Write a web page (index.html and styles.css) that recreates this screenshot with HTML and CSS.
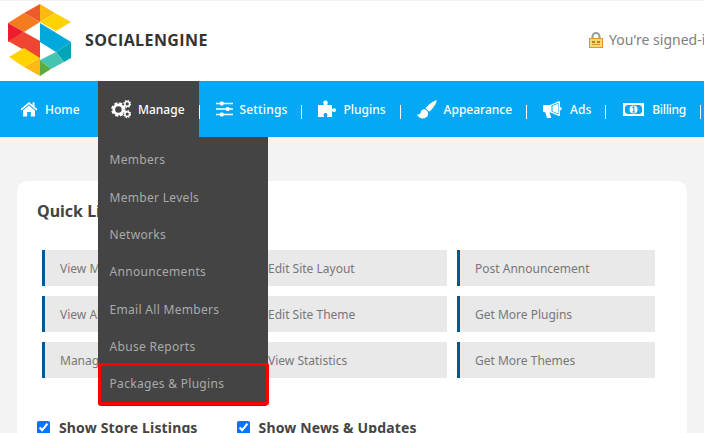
FILE: index.html
```html
<!DOCTYPE html>
<html lang="en">
<head>
<meta charset="utf-8">
<title>SocialEngine Admin</title>
<link rel="stylesheet" href="styles.css">
</head>
<body>
<header class="header">
  <svg class="logo" viewBox="0 0 72 80" width="72" height="80" aria-hidden="true">
    <polygon fill="#ef5a2d" points="40,3 40,21 24,12"/>
    <polygon fill="#f47b20" points="24,12 40,21 24,31 8,22"/>
    <polygon fill="#fdb913" points="40,3 55,12 40,21"/>
    <polygon fill="#ffd200" points="55,12 71,21 56,30 40,21"/>
    <polygon fill="#ed1c2e" points="8,22 24,31 8,41"/>
    <polygon fill="#f04530" points="24,31 40,40 40,58 8,40"/>
    <polygon fill="#00a8dc" points="40,22 71,41 56,51 40,41"/>
    <polygon fill="#00a6b8" points="71,41 71,57 64,61 56,51"/>
    <polygon fill="#45c4b4" points="56,51 64,61 51,68 40,59"/>
    <polygon fill="#5bab3e" points="40,59 51,68 40,75"/>
    <polygon fill="#ffd200" points="9,56 24,47 40,57 24,66"/>
    <polygon fill="#fdb913" points="24,66 40,57 40,75"/>
  </svg>
  <div class="brand">SOCIALENGINE</div>
  <div class="signed">
    <svg class="lock" viewBox="0 0 14 16" width="14" height="16" aria-hidden="true">
      <path d="M3.5 7V4.5a3.5 3.5 0 0 1 7 0V7" fill="none" stroke="#9a9a9a" stroke-width="2"/>
      <rect x="0.5" y="6.5" width="13" height="9" fill="#f8d675" stroke="#d99a2b"/>
      <rect x="3" y="9" width="3" height="2" fill="#b8801f"/>
      <rect x="8" y="9" width="3" height="2" fill="#b8801f"/>
      <rect x="3" y="12" width="8" height="1" fill="#d99a2b"/>
    </svg>
    <span>You're signed-in as admin</span>
  </div>
</header>

<nav class="nav">
  <a class="nav-item first">
    <svg class="icon" viewBox="0 0 18 16" width="18" height="16" aria-hidden="true">
      <path d="M9 1 L0.5 8.3 L1.6 9.4 L9 3.2 L16.4 9.4 L17.5 8.3 L14.5 5.7 V1.5 H12.5 V4 Z" fill="#fff"/>
      <path d="M9 4.4 L3 9.4 V15.5 H7.2 V11 H10.8 V15.5 H15 V9.4 Z" fill="#fff"/>
    </svg>Home</a>
  <div class="nav-item manage">
    <svg class="icon" viewBox="0 0 22 20" width="22" height="20" aria-hidden="true">
      <circle cx="8" cy="10.5" r="5" fill="none" stroke="#fff" stroke-width="3"/>
      <circle cx="8" cy="10.5" r="6.6" fill="none" stroke="#fff" stroke-width="2.4" stroke-dasharray="3.2 2"/>
      <circle cx="17.5" cy="4.5" r="2.5" fill="none" stroke="#fff" stroke-width="1.6"/>
      <circle cx="17.5" cy="4.5" r="3.7" fill="none" stroke="#fff" stroke-width="1.3" stroke-dasharray="1.6 1.3"/>
      <circle cx="17.5" cy="15.5" r="2.5" fill="none" stroke="#fff" stroke-width="1.6"/>
      <circle cx="17.5" cy="15.5" r="3.7" fill="none" stroke="#fff" stroke-width="1.3" stroke-dasharray="1.6 1.3"/>
    </svg>Manage
    <ul class="dropdown">
      <li class="drop-item">Members</li>
      <li class="drop-item">Member Levels</li>
      <li class="drop-item">Networks</li>
      <li class="drop-item">Announcements</li>
      <li class="drop-item">Email All Members</li>
      <li class="drop-item">Abuse Reports</li>
      <li class="drop-item marked">Packages &amp; Plugins</li>
    </ul>
  </div>
  <span class="sep"></span>
  <a class="nav-item settings">
    <svg class="icon" viewBox="0 0 17 16" width="17" height="16" aria-hidden="true">
      <path d="M0 2.5H17M0 8H17M0 13.5H17" stroke="#fff" stroke-width="1.5"/>
      <rect x="4" y="0.5" width="3.5" height="4" rx="1" fill="#fff"/>
      <rect x="10" y="6" width="3.5" height="4" rx="1" fill="#fff"/>
      <rect x="4" y="11.5" width="3.5" height="4" rx="1" fill="#fff"/>
    </svg>Settings</a>
  <span class="sep"></span>
  <a class="nav-item">
    <svg class="icon" viewBox="0 0 18 18" width="18" height="18" aria-hidden="true">
      <path d="M0 5H5.2C6 5 6 4.2 5.5 3.6C4.6 2.6 5.6 0.5 7.5 0.5C9.4 0.5 10.4 2.6 9.5 3.6C9 4.2 9 5 9.8 5H14V8.4C14 9.2 14.8 9.2 15.3 8.7C16.2 7.9 18 8.6 18 10.2C18 11.8 16.2 12.5 15.3 11.7C14.8 11.2 14 11.2 14 12V17H9.6C8.8 17 8.8 16.2 9.2 15.7C9.9 14.8 9.2 13 7.5 13C5.8 13 5.1 14.8 5.8 15.7C6.2 16.2 6.2 17 5.4 17H0Z" fill="#fff"/>
    </svg>Plugins</a>
  <span class="sep"></span>
  <a class="nav-item">
    <svg class="icon" viewBox="0 0 20 19" width="20" height="19" aria-hidden="true">
      <path d="M19.6 0.4C20.4 1.2 16.5 8.5 12.2 11.8L8.4 8.3C11.6 4.2 18.8 -0.4 19.6 0.4Z" fill="#fff"/>
      <path d="M7.4 9.3C5 9.3 4 11 3.6 12.7C3.3 14 2 14.8 0 14.5C1.5 17.8 5 19.2 8 18C10.6 16.9 11.6 14.4 11 12.6C10.5 11 9.2 9.6 7.4 9.3Z" fill="#fff"/>
    </svg>Appearance</a>
  <span class="sep"></span>
  <a class="nav-item">
    <svg class="icon" viewBox="0 0 20 17" width="20" height="17" aria-hidden="true">
      <path d="M0 5.5C0 4.7 0.7 4 1.5 4H7L15.5 0.3C16.5 0 17 0.6 17 1.3V6C18 6.2 18.8 6.8 18.8 7.7C18.8 8.6 18 9.2 17 9.4V14C17 14.8 16.4 15.2 15.5 15L7 11.3H6.6L8 16.2C8.2 16.7 7.8 17 7.4 17H4.6C4.2 17 3.9 16.8 3.8 16.4L2.4 11.3H1.5C0.7 11.3 0 10.6 0 9.8Z" fill="#fff"/>
      <path d="M8.5 4.6L15.5 1.8V13.5L8.5 10.6Z" fill="#05a8f5"/>
      <path d="M9.5 5L15 2.8V12.5L9.5 10.2Z" fill="#fff"/>
    </svg>Ads</a>
  <span class="sep"></span>
  <a class="nav-item billing">
    <svg class="icon" viewBox="0 0 21 13" width="21" height="13" aria-hidden="true">
      <rect width="21" height="13" fill="#fff"/>
      <path d="M3.5 2H17.5C17.5 3 18 3.5 19 3.5V9.5C18 9.5 17.5 10 17.5 11H3.5C3.5 10 3 9.5 2 9.5V3.5C3 3.5 3.5 3 3.5 2Z" fill="#05a8f5"/>
      <circle cx="10.5" cy="6.5" r="4" fill="#fff"/>
      <path d="M9.3 4.6L10.8 3.8V9H9.8M9.3 9H12" fill="none" stroke="#05a8f5" stroke-width="1.1"/>
    </svg>Billing</a>
  <span class="sep"></span>
</nav>

<main class="page">
  <section class="card">
    <h2 class="card-title">Quick Links</h2>
    <div class="links">
      <a class="tile">View Members</a>
      <a class="tile">Edit Site Layout</a>
      <a class="tile">Post Announcement</a>
      <a class="tile">View Abuse Reports</a>
      <a class="tile">Edit Site Theme</a>
      <a class="tile">Get More Plugins</a>
      <a class="tile">Manage Packages</a>
      <a class="tile">View Statistics</a>
      <a class="tile">Get More Themes</a>
    </div>
    <div class="options">
      <label class="option"><input type="checkbox" checked>Show Store Listings</label>
      <label class="option"><input type="checkbox" checked>Show News &amp; Updates</label>
    </div>
  </section>
</main>
</body>
</html>
```
FILE: styles.css
```css
* { box-sizing: border-box; }
html, body { margin: 0; height: 433px; overflow: hidden; }
body {
  background: #f3f3f3;
  font-family: "Noto Sans", "Liberation Sans", sans-serif;
  font-size: 12px;
  color: #777;
  padding-top: 1px;
}
.header {
  display: flex;
  align-items: center;
  height: 80px;
  background: #fff;
  width: 704px;
  overflow: hidden;
  white-space: nowrap;
}
.logo { flex: none; margin-top: -1px; }
.brand {
  margin-left: 13px;
  font-family: "Open Sans", sans-serif;
  font-weight: 700;
  font-size: 16px;
  letter-spacing: 0.4px;
  color: #333;
  width: 504px;
  flex: none;
  margin-top: -2px;
}
.signed {
  flex: none;
  display: flex;
  align-items: center;
  gap: 6px;
  font-size: 14px;
  color: #808080;
  margin-top: -3px;
}
.lock { flex: none; }
.nav {
  display: flex;
  align-items: center;
  height: 56px;
  background: #05a8f5;
  color: #fff;
  font-size: 12px;
  font-weight: 500;
}
.nav-item {
  display: flex;
  align-items: center;
  height: 100%;
  gap: 7px;
  padding: 0 14px 0 16px;
  white-space: nowrap;
}
.nav-item.first { padding: 0 18px 0 20px; }
.nav-item.settings { letter-spacing: 0.15px; }
.nav-item.billing { padding-left: 17px; gap: 8px; letter-spacing: -0.3px; }
.manage {
  position: relative;
  background: #444;
  width: 101px;
  flex: none;
  padding: 0 14px 0 13px;
}
.sep {
  flex: none;
  width: 1px;
  height: 14px;
  margin-top: 5px;
  background: #fff;
}
.dropdown {
  position: absolute;
  top: 100%;
  left: 0;
  width: 170px;
  height: 269px;
  margin: 0;
  padding: 4.4px 0 0;
  list-style: none;
  background: #444;
  border-radius: 0 0 3px 3px;
  z-index: 2;
  font-weight: 400;
  letter-spacing: 0.3px;
  color: #aaa;
}
.drop-item {
  height: 37.3px;
  line-height: 37px;
  padding-left: 12px;
}
.drop-item.marked {
  height: 42px;
  margin: -2.2px -1px 0 0;
  line-height: 36px;
  padding-left: 9px;
  border: 3px solid #f00;
  border-radius: 2px;
}
.page { padding: 44px 17px 0; }
.card {
  background: #fff;
  border-radius: 10px;
  padding: 20px 20px 0;
  height: 400px;
}
.card-title {
  margin: 0;
  font-size: 16px;
  line-height: 20px;
  font-weight: 700;
  color: #444;
}
.links {
  display: grid;
  grid-template-columns: 198px 197px 198px;
  grid-auto-rows: 36px;
  column-gap: 10px;
  row-gap: 10px;
  margin: 29px 0 0 5px;
}
.tile {
  display: flex;
  align-items: center;
  background: #e9e9e9;
  border-left: 3px solid #005a96;
  padding-left: 15px;
}
.options {
  display: flex;
  gap: 39px;
  margin-top: 40px;
  font-size: 14px;
  font-weight: 700;
  letter-spacing: 0.15px;
  color: #444;
}
.option { display: flex; align-items: center; gap: 9px; }
.option input { margin: 0; width: 13px; height: 13px; flex: none; }
```
